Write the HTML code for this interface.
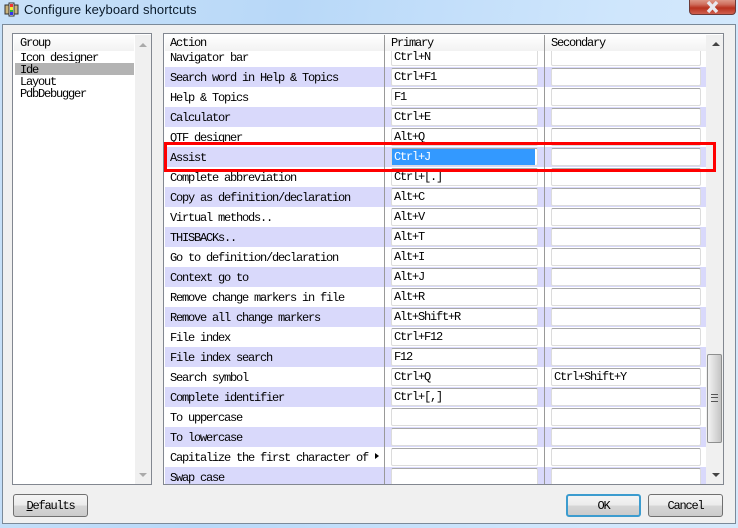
<!DOCTYPE html>
<html>
<head>
<meta charset="utf-8">
<style>
html,body{margin:0;padding:0;}
body{width:738px;height:528px;overflow:hidden;position:relative;background:linear-gradient(100deg,#c9e1f8 0%,#b8d8f8 35%,#cfe6fc 75%,#d6e9fb 100%);font:12px/14px "Liberation Mono",monospace;letter-spacing:-1.2px;color:#000;}
div{position:absolute;box-sizing:border-box;white-space:pre;}
#title{left:24px;top:1px;font:13px/18px "Liberation Sans",sans-serif;letter-spacing:.1px;color:#0a1a2a;}
#close{left:689px;top:-2px;width:47px;height:17px;border:1px solid #6b3a38;border-radius:0 0 4px 4px;background:linear-gradient(#e0a090 0,#d0705f 35%,#b8321f 60%,#d0604f 100%);}
#dlg{left:2px;top:24px;width:734px;height:500px;background:#f0f0f0;border:1px solid #7b8a99;}
.frame{top:33px;height:452px;background:#fff;border:1px solid #828790;overflow:hidden;}
.hd{top:1px;height:16px;background:linear-gradient(#fff,#f2f2f2);line-height:15px;}
.sb{background:#f0f0f0;}
.row{left:1px;width:541px;height:20px;}
.band{background:#d9d9fb;}
.lab{left:5px;top:4px;}
.ed{width:147px;height:18px;top:1px;background:#fff;border:1px solid #dcdcdc;border-top:1px solid #a8a8a8;border-radius:2px;padding:1px 0 0 2px;line-height:14px;}
.p{left:226px;}
.s{left:386px;width:150px;}
.sep{top:1px;width:1px;height:450px;background:#999;}
.gi{left:7px;}
.btn{top:494px;height:23px;width:75px;border:1px solid #707070;border-radius:3px;background:linear-gradient(#f4f4f4 0,#ececec 48%,#d6d6d6 52%,#cbcbcb 100%);text-align:center;line-height:22px;}
.tri{width:0;height:0;border-left:4px solid transparent;border-right:4px solid transparent;}
.up{border-bottom:4px solid #555;}
.dn{border-top:4px solid #555;}
</style>
</head>
<body>
<svg style="position:absolute;left:4px;top:2px" width="15" height="15" viewBox="0 0 15 15">
<rect x="1" y="3" width="13" height="9" fill="#c9b27a" stroke="#333"/>
<rect x="5" y="1" width="5" height="13" fill="#fff" stroke="#333"/>
<rect x="6" y="2" width="3" height="3" fill="#e33"/>
<rect x="6" y="5" width="3" height="3" fill="#ee3"/>
<rect x="6" y="8" width="3" height="2" fill="#3b3"/>
<rect x="6" y="10" width="3" height="3" fill="#33e"/>
</svg>
<div id="title">Configure keyboard shortcuts</div>
<div id="close"><svg style="position:absolute;left:15px;top:2px" width="15" height="13" viewBox="0 0 15 13"><path d="M3 1 L12 11 M12 1 L3 11" stroke="#e8e8ee" stroke-width="3.4" fill="none"/></svg></div>
<div id="dlg"></div>

<div class="frame" style="left:12px;width:140px;">
  <div class="hd" style="left:1px;width:120px;"><span style="position:absolute;left:6px;top:1px">Group</span></div>
  <div class="gi" style="top:17px">Icon designer</div>
  <div style="left:2px;top:29px;width:119px;height:12px;background:#b3b3b3"></div>
  <div class="gi" style="top:29px">Ide</div>
  <div class="gi" style="top:41px">Layout</div>
  <div class="gi" style="top:53px">PdbDebugger</div>
  <div class="sb" style="left:122px;top:1px;width:16px;height:449px;"></div>
  <div class="tri up" style="left:126px;top:9px;border-bottom-color:#aaa"></div>
  <div class="tri dn" style="left:126px;top:439px;border-top-color:#aaa"></div>
</div>

<div class="frame" style="left:163px;width:561px;">
  <div style="left:0;top:0;width:542px;height:450px;overflow:hidden;">
    <div class="row" style="top:13px"><div class="lab">Navigator bar</div><div class="ed p">Ctrl+N</div><div class="ed s"></div></div>
    <div class="row band" style="top:33px"><div class="lab">Search word in Help &amp; Topics</div><div class="ed p">Ctrl+F1</div><div class="ed s"></div></div>
    <div class="row" style="top:53px"><div class="lab">Help &amp; Topics</div><div class="ed p">F1</div><div class="ed s"></div></div>
    <div class="row band" style="top:73px"><div class="lab">Calculator</div><div class="ed p">Ctrl+E</div><div class="ed s"></div></div>
    <div class="row" style="top:93px"><div class="lab">QTF designer</div><div class="ed p">Alt+Q</div><div class="ed s"></div></div>
    <div class="row band" style="top:113px"><div class="lab">Assist</div><div class="ed p" style="color:#fff"><div style="left:0;top:0;width:143px;height:16px;background:#3399ff;padding-left:2px;line-height:16px">Ctrl+J</div></div><div class="ed s"></div></div>
    <div class="row" style="top:133px"><div class="lab">Complete abbreviation</div><div class="ed p">Ctrl+[.]</div><div class="ed s"></div></div>
    <div class="row band" style="top:153px"><div class="lab">Copy as definition/declaration</div><div class="ed p">Alt+C</div><div class="ed s"></div></div>
    <div class="row" style="top:173px"><div class="lab">Virtual methods..</div><div class="ed p">Alt+V</div><div class="ed s"></div></div>
    <div class="row band" style="top:193px"><div class="lab">THISBACKs..</div><div class="ed p">Alt+T</div><div class="ed s"></div></div>
    <div class="row" style="top:213px"><div class="lab">Go to definition/declaration</div><div class="ed p">Alt+I</div><div class="ed s"></div></div>
    <div class="row band" style="top:233px"><div class="lab">Context go to</div><div class="ed p">Alt+J</div><div class="ed s"></div></div>
    <div class="row" style="top:253px"><div class="lab">Remove change markers in file</div><div class="ed p">Alt+R</div><div class="ed s"></div></div>
    <div class="row band" style="top:273px"><div class="lab">Remove all change markers</div><div class="ed p">Alt+Shift+R</div><div class="ed s"></div></div>
    <div class="row" style="top:293px"><div class="lab">File index</div><div class="ed p">Ctrl+F12</div><div class="ed s"></div></div>
    <div class="row band" style="top:313px"><div class="lab">File index search</div><div class="ed p">F12</div><div class="ed s"></div></div>
    <div class="row" style="top:333px"><div class="lab">Search symbol</div><div class="ed p">Ctrl+Q</div><div class="ed s">Ctrl+Shift+Y</div></div>
    <div class="row band" style="top:353px"><div class="lab">Complete identifier</div><div class="ed p">Ctrl+[,]</div><div class="ed s"></div></div>
    <div class="row" style="top:373px"><div class="lab">To uppercase</div><div class="ed p"></div><div class="ed s"></div></div>
    <div class="row band" style="top:393px"><div class="lab">To lowercase</div><div class="ed p"></div><div class="ed s"></div></div>
    <div class="row" style="top:413px"><div class="lab">Capitalize the first character of</div><div style="left:210px;top:6px;width:0;height:0;border-left:4px solid #000;border-top:3px solid transparent;border-bottom:3px solid transparent"></div><div class="ed p"></div><div class="ed s"></div></div>
    <div class="row band" style="top:433px"><div class="lab">Swap case</div><div class="ed p"></div><div class="ed s"></div></div>
    <div class="hd" style="left:1px;width:541px;background:linear-gradient(#fff,#f2f2f2)"><span style="position:absolute;left:5px;top:1px">Action</span><span style="position:absolute;left:226px;top:1px">Primary</span><span style="position:absolute;left:386px;top:1px">Secondary</span></div>
    <div class="sep" style="left:220px"></div>
    <div class="sep" style="left:380px"></div>
  </div>
  <div class="sb" style="left:542px;top:1px;width:17px;height:449px;"></div>
  <div class="tri up" style="left:548px;top:8px;border-bottom-color:#444"></div>
  <div class="tri dn" style="left:548px;top:439px;border-top-color:#444"></div>
  <div style="left:543px;top:320px;width:15px;height:89px;border:1px solid #8e8f8f;border-radius:2px;background:linear-gradient(90deg,#f2f2f2,#dcdcdc 50%,#c4c4c4)"></div>
  <div style="left:547px;top:360px;width:7px;height:8px;border-top:1px solid #555;border-bottom:1px solid #555;"><div style="left:0;top:2px;width:7px;height:2px;border-top:1px solid #555"></div></div>
</div>

<div style="left:164px;top:142px;width:552px;height:30px;border:3px solid #f00;"></div>

<div class="btn" style="left:13px;"><span style="text-decoration:underline">D</span>efaults</div>
<div class="btn" style="left:566px;border:2px solid #3c9ccf;line-height:20px;">OK</div>
<div class="btn" style="left:648px;">Cancel</div>
</body>
</html>
